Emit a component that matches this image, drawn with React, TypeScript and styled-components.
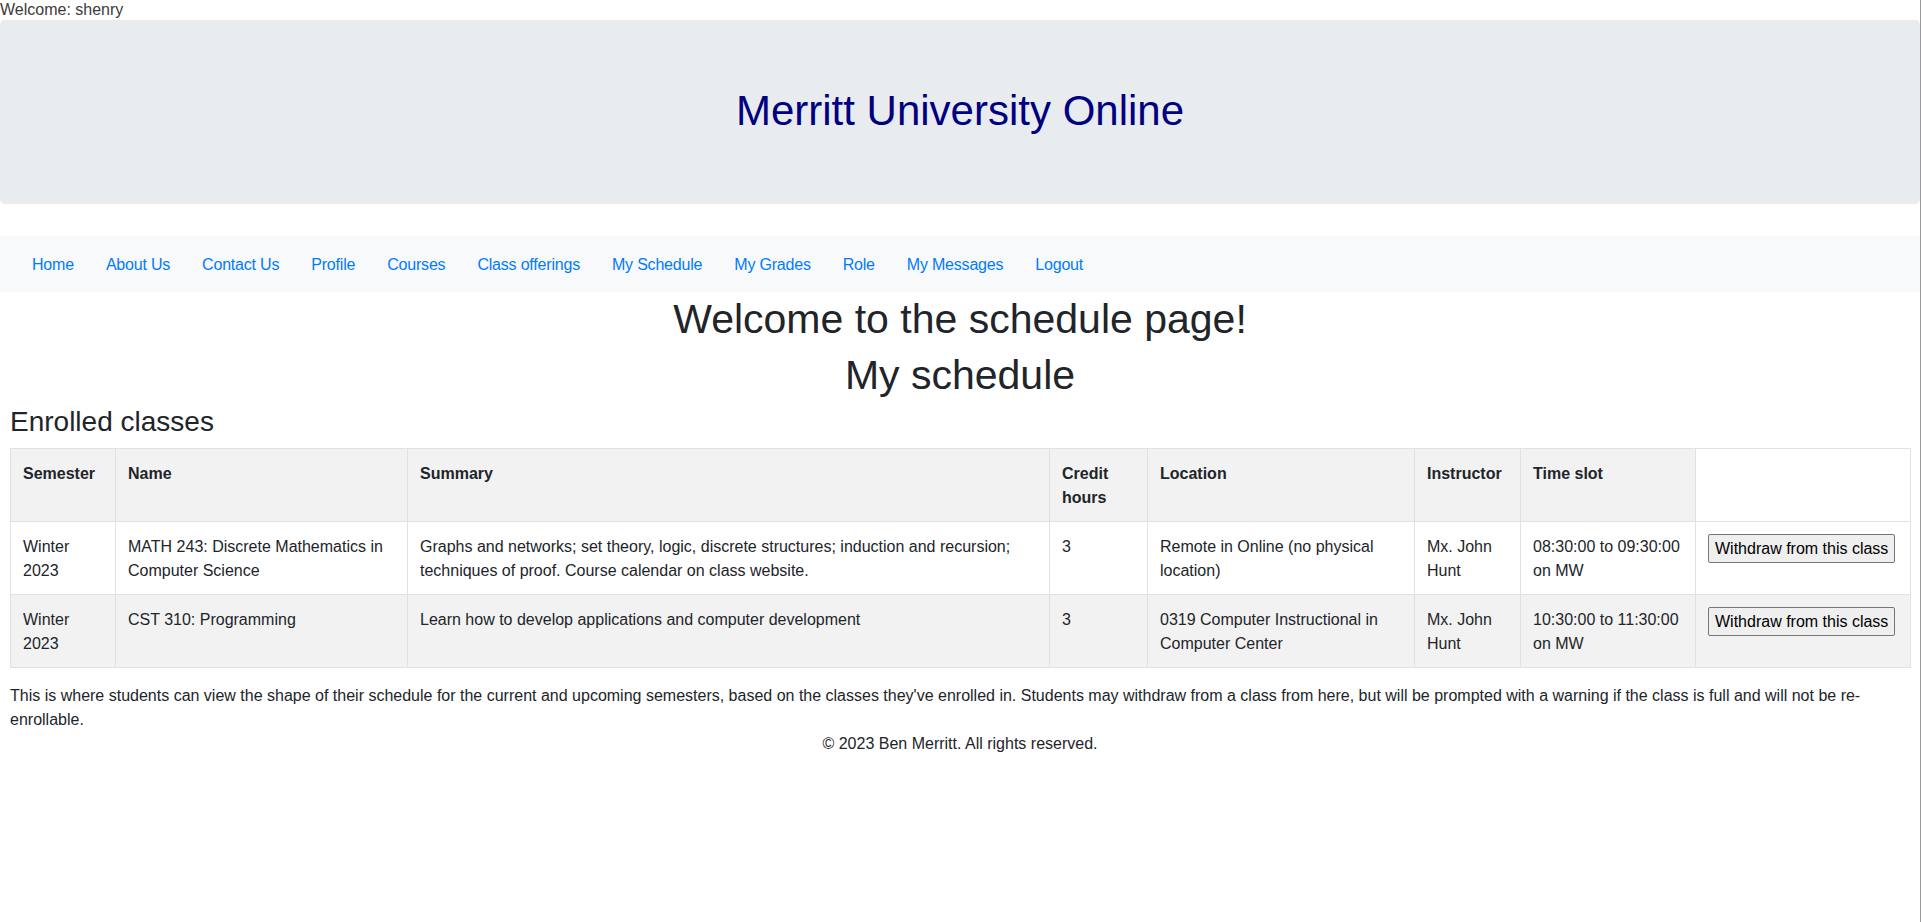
import React from "react";
import styled, { createGlobalStyle } from "styled-components";

const GlobalStyle = createGlobalStyle`
  html, body {
    margin: 0;
    padding: 0;
    background: #fff;
  }

  body {
    font-family: "Liberation Sans", Arial, sans-serif;
    font-size: 16px;
    line-height: 1.5;
    color: #212529;
  }

  *, *::before, *::after {
    box-sizing: border-box;
  }
`;

interface Course {
  semester: string;
  name: string;
  summary: string;
  credits: string;
  location: string;
  instructor: string;
  time: string;
}

const navItems = [
  "Home",
  "About Us",
  "Contact Us",
  "Profile",
  "Courses",
  "Class offerings",
  "My Schedule",
  "My Grades",
  "Role",
  "My Messages",
  "Logout",
];

const columns = [
  { label: "Semester", width: 105 },
  { label: "Name", width: 292 },
  { label: "Summary", width: 642 },
  { label: "Credit hours", width: 98 },
  { label: "Location", width: 267 },
  { label: "Instructor", width: 106 },
  { label: "Time slot", width: 175 },
  { label: "", width: 215 },
];

const courses: Course[] = [
  {
    semester: "Winter 2023",
    name: "MATH 243: Discrete Mathematics in Computer Science",
    summary:
      "Graphs and networks; set theory, logic, discrete structures; induction and recursion; techniques of proof. Course calendar on class website.",
    credits: "3",
    location: "Remote in Online (no physical location)",
    instructor: "Mx. John Hunt",
    time: "08:30:00 to 09:30:00 on MW",
  },
  {
    semester: "Winter 2023",
    name: "CST 310: Programming",
    summary: "Learn how to develop applications and computer development",
    credits: "3",
    location: "0319 Computer Instructional in Computer Center",
    instructor: "Mx. John Hunt",
    time: "10:30:00 to 11:30:00 on MW",
  },
];

const App = () => {
  return (
    <>
      <GlobalStyle />
      <Page>
        <WelcomeBar>Welcome: shenry</WelcomeBar>
        <Jumbotron>
          <SiteTitle>Merritt University Online</SiteTitle>
        </Jumbotron>
        <NavBar>
          {navItems.map((item) => (
            <NavLink key={item} href="#">
              {item}
            </NavLink>
          ))}
        </NavBar>
        <Content>
          <PageTitle>Welcome to the schedule page!</PageTitle>
          <PageTitle>My schedule</PageTitle>
          <SectionTitle>Enrolled classes</SectionTitle>
          <Table>
            <colgroup>
              {columns.map((col, i) => (
                <Col key={i} $w={col.width} />
              ))}
            </colgroup>
            <tbody>
              <tr>
                {columns.map((col, i) => (
                  <HeadCell key={i} $shade={col.label !== ""}>
                    {col.label}
                  </HeadCell>
                ))}
              </tr>
              {courses.map((c, i) => (
                <tr key={c.name}>
                  <Cell $shade={i % 2 === 1}>{c.semester}</Cell>
                  <Cell $shade={i % 2 === 1}>{c.name}</Cell>
                  <Cell $shade={i % 2 === 1}>{c.summary}</Cell>
                  <Cell $shade={i % 2 === 1}>{c.credits}</Cell>
                  <Cell $shade={i % 2 === 1}>{c.location}</Cell>
                  <Cell $shade={i % 2 === 1}>{c.instructor}</Cell>
                  <Cell $shade={i % 2 === 1}>{c.time}</Cell>
                  <Cell $shade={i % 2 === 1}>
                    <WithdrawButton type="button">
                      Withdraw from this class
                    </WithdrawButton>
                  </Cell>
                </tr>
              ))}
            </tbody>
          </Table>
          <Blurb>
            This is where students can view the shape of their schedule for the
            current and upcoming semesters, based on the classes they've
            enrolled in. Students may withdraw from a class from here, but will
            be prompted with a warning if the class is full and will not be
            re-enrollable.
          </Blurb>
          <Footer>© 2023 Ben Merritt. All rights reserved.</Footer>
        </Content>
      </Page>
    </>
  );
};

export default App;

const Page = styled.div`
  min-height: 100vh;
  border-right: 1px solid #9a9a9a;
`;

const WelcomeBar = styled.div`
  font-size: 16px;
  line-height: 20px;
  color: #3a3a3a;
`;

const Jumbotron = styled.header`
  background: #e9ecef;
  border-radius: 4.8px;
  padding: 64px 32px;
  margin-bottom: 32px;
`;

const SiteTitle = styled.h1`
  margin: 0 0 5px;
  padding-top: 3px;
  font-size: 42px;
  font-weight: 500;
  line-height: 48px;
  color: #000080;
  text-align: center;
`;

const NavBar = styled.nav`
  display: flex;
  align-items: center;
  background: #f8f9fa;
  padding: 8px 16px;
`;

const NavLink = styled.a`
  display: block;
  padding: 9px 16px 7px;
  font-size: 16px;
  line-height: 24px;
  letter-spacing: -0.2px;
  color: #007bff;
  text-decoration: none;
`;

const Content = styled.main`
  padding: 0 10px;
`;

const PageTitle = styled.h1`
  margin: 0 0 5px;
  padding-top: 3px;
  font-size: 41px;
  font-weight: 500;
  line-height: 48px;
  text-align: center;
`;

const SectionTitle = styled.h3`
  margin: 0 0 10px;
  padding-top: 2px;
  font-size: 28px;
  font-weight: 500;
  line-height: 32px;
`;

const Table = styled.table`
  width: 100%;
  table-layout: fixed;
  border-collapse: collapse;
  border: 1px solid #dee2e6;
  margin-bottom: 16px;
`;

const Col = styled.col<{ $w: number }>`
  width: ${({ $w }) => $w}px;
`;

const HeadCell = styled.th<{ $shade: boolean }>`
  padding: 13px 12px 11px;
  border: 1px solid #dee2e6;
  text-align: left;
  vertical-align: top;
  font-weight: 700;
  line-height: 24px;
  background: ${({ $shade }) => ($shade ? "#f2f2f2" : "#fff")};
`;

const Cell = styled.td<{ $shade: boolean }>`
  padding: 13px 12px 11px;
  border: 1px solid #dee2e6;
  vertical-align: top;
  line-height: 24px;
  background: ${({ $shade }) => ($shade ? "#f2f2f2" : "#fff")};
`;

const WithdrawButton = styled.button`
  margin-top: -1px;
  font-family: inherit;
  font-size: 16px;
  line-height: 25px;
  padding: 1px 6px;
  color: #000;
  background: #efefef;
  border: 1px solid #767676;
  border-radius: 2px;
  white-space: nowrap;
`;

const Blurb = styled.p`
  margin: 0;
  line-height: 24px;
`;

const Footer = styled.footer`
  text-align: center;
  line-height: 24px;
`;
